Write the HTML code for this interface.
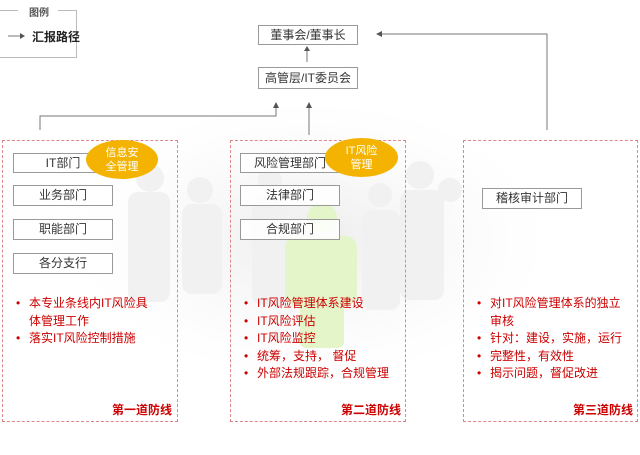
<!DOCTYPE html>
<html><head><meta charset="utf-8"><style>
*{margin:0;padding:0;box-sizing:border-box}
body{width:640px;height:455px;background:#fff;position:relative;overflow:hidden;font-family:"Liberation Sans","Noto Sans CJK SC",sans-serif;font-size:12px;color:#333}
.a{position:absolute}
.box{position:absolute;border:1px solid #999;background:rgba(255,255,255,.85);text-align:center;font-size:12px;color:#333}
.panel{position:absolute;border:1px dashed #d88;top:140px;height:282px}
.oval{position:absolute;background:#f3b300;border-radius:50%;color:#fff;font-size:11px;text-align:center;line-height:14px;padding-top:6px}
ul{position:absolute;list-style:none;color:#c00;font-size:12px;line-height:17.5px}
ul li{position:relative;padding-left:13px}
ul li:before{content:"•";position:absolute;left:0;color:#c00}
.lab{position:absolute;color:#c00;font-weight:bold;font-size:12px;top:401px}
</style></head><body>
<svg class="a" style="left:0;top:0" width="640" height="455">
<defs><radialGradient id="g" cx=".5" cy=".5" r=".5"><stop offset="0" stop-color="#ececec"/><stop offset="1" stop-color="#f8f8f8" stop-opacity="0"/></radialGradient></defs>
<ellipse cx="310" cy="240" rx="240" ry="140" fill="url(#g)"/>
<g fill="#f1f1f1">
<circle cx="150" cy="178" r="14"/><rect x="128" y="192" width="42" height="110" rx="10"/>
<circle cx="200" cy="190" r="13"/><rect x="182" y="204" width="40" height="90" rx="10"/>
<circle cx="420" cy="175" r="14"/><rect x="400" y="190" width="44" height="110" rx="10"/>
<circle cx="380" cy="195" r="12"/><rect x="362" y="210" width="38" height="100" rx="10"/>
<circle cx="270" cy="180" r="12"/><rect x="252" y="195" width="36" height="110" rx="10"/>
<circle cx="450" cy="190" r="12"/>
</g>
<g fill="#e3f5c9">
<circle cx="322" cy="218" r="15"/><rect x="285" y="236" width="72" height="70" rx="12"/>
<rect x="300" y="300" width="44" height="48" rx="6"/>
</g>
<g stroke="#777" fill="none" stroke-width="1">
<path d="M307 62V50"/><path d="M547 130V34H382"/><path d="M40 130V116H276V108"/><path d="M309 135V108"/>
<path d="M8 36H20"/>
</g>
<g fill="#555">
<path d="M307 46l-3 5h6z"/><path d="M376 34l6-3v6z"/><path d="M276 102l-3 6h6z"/><path d="M309 102l-3 6h6z"/><path d="M25 36l-5-3v6z"/>
</g>
<path d="M0 10.5H18M58 10.5H76.5V57.5H0" stroke="#bbb" fill="none"/>
</svg>
<div class="a" style="left:29px;top:4px;font-size:10px;font-weight:bold;color:#555">图例</div>
<div class="a" style="left:32px;top:28px;font-size:12px;font-weight:bold;color:#222">汇报路径</div>
<div class="box" style="left:258px;top:25px;width:100px;height:20px;line-height:18px">董事会/董事长</div>
<div class="box" style="left:258px;top:67px;width:100px;height:22px;line-height:20px">高管层/IT委员会</div>
<div class="panel" style="left:2px;width:176px"></div>
<div class="panel" style="left:230px;width:176px"></div>
<div class="panel" style="left:463px;width:175px"></div>
<div class="box" style="left:13px;top:153px;width:100px;height:20px;line-height:18px">IT部门</div>
<div class="box" style="left:13px;top:185px;width:100px;height:21px;line-height:19px">业务部门</div>
<div class="box" style="left:13px;top:219px;width:100px;height:21px;line-height:19px">职能部门</div>
<div class="box" style="left:13px;top:253px;width:100px;height:21px;line-height:19px">各分支行</div>
<div class="oval" style="left:86px;top:140px;width:72px;height:39px">信息安<br>全管理</div>
<div class="box" style="left:240px;top:153px;width:100px;height:20px;line-height:18px">风险管理部门</div>
<div class="box" style="left:240px;top:185px;width:100px;height:21px;line-height:19px">法律部门</div>
<div class="box" style="left:240px;top:219px;width:100px;height:21px;line-height:19px">合规部门</div>
<div class="oval" style="left:325px;top:138px;width:73px;height:39px">IT风险<br>管理</div>
<div class="box" style="left:482px;top:188px;width:100px;height:21px;line-height:19px">稽核审计部门</div>
<ul style="left:16px;top:295px;width:150px"><li>本专业条线内IT风险具<br>体管理工作</li><li>落实IT风险控制措施</li></ul>
<ul style="left:244px;top:295px;width:160px"><li>IT风险管理体系建设</li><li>IT风险评估</li><li>IT风险监控</li><li>统筹，支持， 督促</li><li>外部法规跟踪，合规管理</li></ul>
<ul style="left:477px;top:295px;width:150px"><li>对IT风险管理体系的独立审核</li><li>针对：建设，实施，运行</li><li>完整性，有效性</li><li>揭示问题，督促改进</li></ul>
<div class="lab" style="left:112px">第一道防线</div>
<div class="lab" style="left:341px">第二道防线</div>
<div class="lab" style="left:573px">第三道防线</div>
</body></html>
